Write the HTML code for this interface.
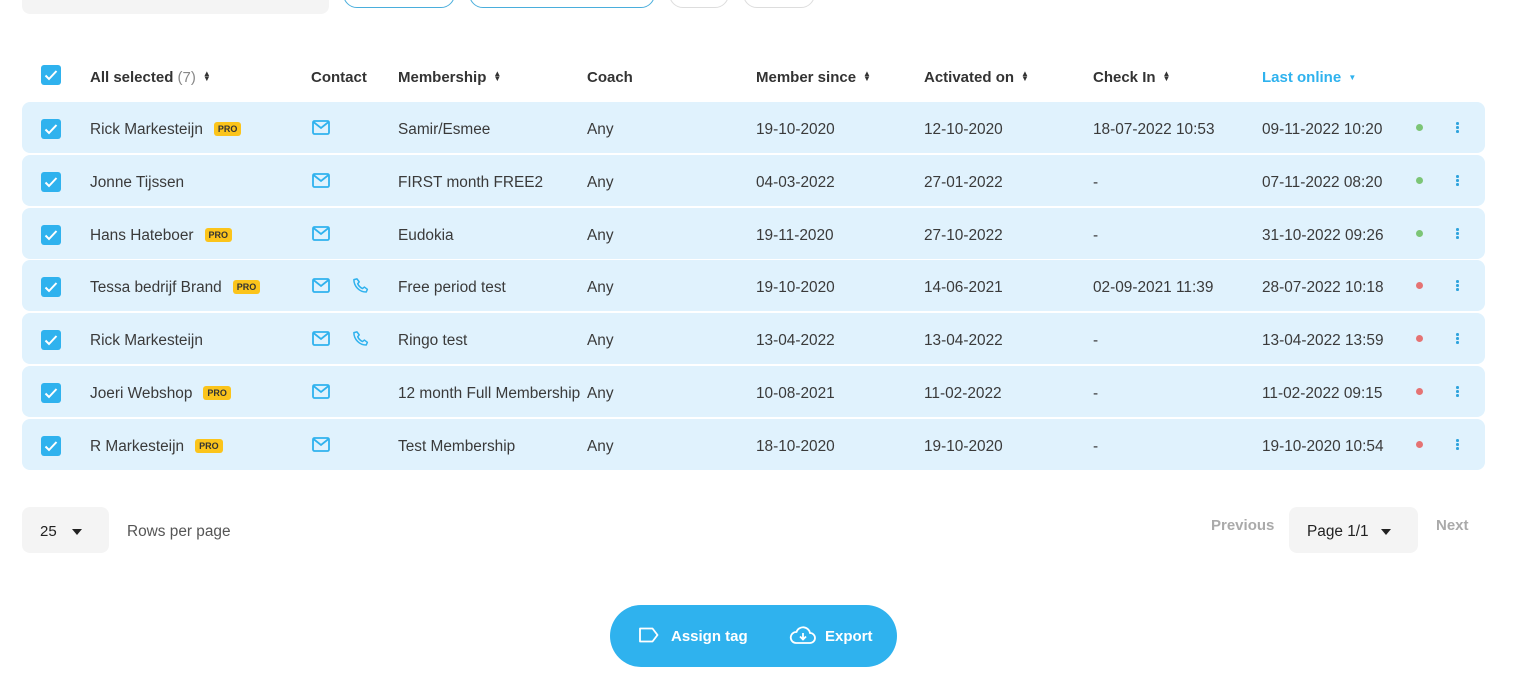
<!DOCTYPE html>
<html><head><meta charset="utf-8"><style>
*{box-sizing:border-box;margin:0;padding:0}
body{width:1527px;height:679px;background:#fff;font-family:"Liberation Sans",sans-serif;color:#333;position:relative;overflow:hidden;font-size:15.4px}
.a{position:absolute}
.hd{top:69px;font-weight:bold;font-size:15px;color:#333;white-space:nowrap}
.sort{display:inline-block;font-size:8px;line-height:5px;vertical-align:middle;margin-left:7px;position:relative;top:-2px}
.row{position:absolute;left:22px;width:1463px;height:51px;background:#e0f2fd;border-radius:8px}
.cb{position:absolute;width:20px;height:20px;background:#2fb2ee;border-radius:3px}
.cb svg{position:absolute;left:3px;top:4px}
.t{position:absolute;white-space:nowrap;color:#3a3a3a}
.pro{display:inline-block;background:#fbc41b;color:#333;font-size:9px;font-weight:bold;padding:2px 4px;border-radius:3px;margin-left:11px;vertical-align:2px}
.dot{position:absolute;width:7px;height:7px;border-radius:50%}
.kb{position:absolute;width:3px}
.kb i{display:block;width:2.5px;height:2.5px;background:#2fa3dd;border-radius:50%;margin-bottom:1.5px}
</style></head><body>
<div class="a" style="left:22px;top:-10px;width:307px;height:24px;background:#f4f4f4;border-radius:8px"></div>
<div class="a" style="left:343px;top:-20px;width:112px;height:28px;border:1.5px solid #4aaedc;border-radius:14px"></div>
<div class="a" style="left:469px;top:-20px;width:186px;height:28px;border:1.5px solid #4aaedc;border-radius:14px"></div>
<div class="a" style="left:669px;top:-20px;width:60px;height:28px;border:1px solid #ddd;border-radius:14px"></div>
<div class="a" style="left:743px;top:-20px;width:72px;height:28px;border:1px solid #ddd;border-radius:14px"></div>

<div class="cb" style="left:41px;top:65px"><svg width="14" height="12" viewBox="0 0 14 12"><path d="M1.5 6.5l3.5 3.5 7.5-8" stroke="#fff" stroke-width="2" fill="none"/></svg></div>
<div class="a hd" style="left:90px">All selected <span style="color:#888;font-weight:normal">(7)</span><span class="sort">▲<br>▼</span></div>
<div class="a hd" style="left:311px">Contact</div>
<div class="a hd" style="left:398px">Membership<span class="sort">▲<br>▼</span></div>
<div class="a hd" style="left:587px">Coach</div>
<div class="a hd" style="left:756px">Member since<span class="sort">▲<br>▼</span></div>
<div class="a hd" style="left:924px">Activated on<span class="sort">▲<br>▼</span></div>
<div class="a hd" style="left:1093px">Check In<span class="sort">▲<br>▼</span></div>
<div class="a hd" style="left:1262px;color:#2fb2ee">Last online <span style="font-size:8px;vertical-align:2px;margin-left:3px">▼</span></div>

<div id="rows"></div>
<script>
var d=[["Rick Markesteijn",1,0,"Samir/Esmee","19-10-2020","12-10-2020","18-07-2022 10:53","09-11-2022 10:20","#7cc576"],
["Jonne Tijssen",0,0,"FIRST month FREE2","04-03-2022","27-01-2022","-","07-11-2022 08:20","#7cc576"],
["Hans Hateboer",1,0,"Eudokia","19-11-2020","27-10-2022","-","31-10-2022 09:26","#7cc576"],
["Tessa bedrijf Brand",1,1,"Free period test","19-10-2020","14-06-2021","02-09-2021 11:39","28-07-2022 10:18","#e57373"],
["Rick Markesteijn",0,1,"Ringo test","13-04-2022","13-04-2022","-","13-04-2022 13:59","#e57373"],
["Joeri Webshop",1,0,"12 month Full Membership","10-08-2021","11-02-2022","-","11-02-2022 09:15","#e57373"],
["R Markesteijn",1,0,"Test Membership","18-10-2020","19-10-2020","-","19-10-2020 10:54","#e57373"]];
var h="";
d.forEach(function(r,i){var c=Math.round(129+i*52.8);var y=c-27;var ty=c-8;
h+='<div class="row" style="top:'+y+'px"></div>';
h+='<div class="cb" style="left:41px;top:'+(c-10)+'px"><svg width="14" height="12" viewBox="0 0 14 12"><path d="M1.5 6.5l3.5 3.5 7.5-8" stroke="#fff" stroke-width="2" fill="none"/></svg></div>';
h+='<div class="t" style="left:90px;top:'+ty+'px">'+r[0]+(r[1]?'<span class="pro">PRO</span>':'')+'</div>';
h+='<svg class="a" style="left:312px;top:'+(c-9)+'px" width="18" height="15" viewBox="0 0 18 15"><rect x="1" y="1" width="16" height="13" rx="1.5" fill="none" stroke="#2fb2ee" stroke-width="1.8"/><path d="M1.5 2l7.5 6 7.5-6" fill="none" stroke="#2fb2ee" stroke-width="1.8"/></svg>';
if(r[2])h+='<svg class="a" style="left:352px;top:'+(c-10)+'px" width="18" height="18" viewBox="0 0 24 24"><path d="M6.6 2.5l3 4-2 2.5c1.3 2.8 3.6 5.1 6.4 6.4l2.5-2 4 3-1.5 3.6c-9 0-16.5-7.5-16.5-16.5z" fill="none" stroke="#2fb2ee" stroke-width="2" stroke-linejoin="round"/></svg>';
h+='<div class="t" style="left:398px;top:'+ty+'px">'+r[3]+'</div>';
h+='<div class="t" style="left:587px;top:'+ty+'px">Any</div>';
h+='<div class="t" style="left:756px;top:'+ty+'px">'+r[4]+'</div>';
h+='<div class="t" style="left:924px;top:'+ty+'px">'+r[5]+'</div>';
h+='<div class="t" style="left:1093px;top:'+ty+'px">'+r[6]+'</div>';
h+='<div class="t" style="left:1262px;top:'+ty+'px">'+r[7]+'</div>';
h+='<div class="dot" style="left:1416px;top:'+(c-5)+'px;background:'+r[8]+'"></div>';
h+='<div class="kb" style="left:1456px;top:'+(c-7)+'px"><i></i><i></i><i></i></div>';
});
document.getElementById("rows").innerHTML=h;
</script>

<div class="a" style="left:22px;top:507px;width:87px;height:46px;background:#f4f4f4;border-radius:8px"></div>
<div class="a" style="left:40px;top:523px;font-size:15px;color:#222">25</div>
<div class="a" style="left:72px;top:529px;width:0;height:0;border-left:5px solid transparent;border-right:5px solid transparent;border-top:6px solid #222"></div>
<div class="a" style="left:127px;top:523px;color:#555">Rows per page</div>

<div class="a" style="left:1211px;top:517px;color:#aaa;font-weight:bold;font-size:15px">Previous</div>
<div class="a" style="left:1289px;top:507px;width:129px;height:46px;background:#f4f4f4;border-radius:8px"></div>
<div class="a" style="left:1307px;top:523px;color:#222">Page 1/1</div>
<div class="a" style="left:1381px;top:529px;width:0;height:0;border-left:5px solid transparent;border-right:5px solid transparent;border-top:6px solid #222"></div>
<div class="a" style="left:1436px;top:517px;color:#aaa;font-weight:bold;font-size:15px">Next</div>

<div class="a" style="left:610px;top:605px;width:287px;height:62px;background:#2fb2ee;border-radius:31px"></div>
<svg class="a" style="left:638px;top:627px" width="22" height="16" viewBox="0 0 22 16"><path d="M2 1.5h12.5l5 6.5-5 6.5h-12.5z" fill="none" stroke="#fff" stroke-width="1.8" stroke-linejoin="round"/></svg>
<div class="a" style="left:671px;top:628px;color:#fff;font-weight:bold;font-size:15px">Assign tag</div>
<svg class="a" style="left:789px;top:625px" width="28" height="20" viewBox="0 0 28 20"><path d="M7 18h14a5 5 0 0 0 0-10 7 7 0 0 0-13.5-1A5.5 5.5 0 0 0 7 18z" fill="none" stroke="#fff" stroke-width="1.8"/><path d="M14 8v6M11 11.5l3 3 3-3" fill="none" stroke="#fff" stroke-width="1.8"/></svg>
<div class="a" style="left:825px;top:628px;color:#fff;font-weight:bold;font-size:15px">Export</div>
</body></html>
